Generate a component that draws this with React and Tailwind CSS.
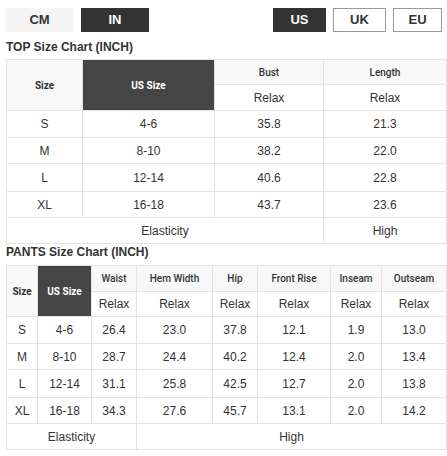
const TOP_ROWS = [
  ['S', '4-6', '35.8', '21.3'],
  ['M', '8-10', '38.2', '22.0'],
  ['L', '12-14', '40.6', '22.8'],
  ['XL', '16-18', '43.7', '23.6'],
]

const PANTS_COLS = ['Waist', 'Hem Width', 'Hip', 'Front Rise', 'Inseam', 'Outseam']

const PANTS_ROWS = [
  ['S', '4-6', '26.4', '23.0', '37.8', '12.1', '1.9', '13.0'],
  ['M', '8-10', '28.7', '24.4', '40.2', '12.4', '2.0', '13.4'],
  ['L', '12-14', '31.1', '25.8', '42.5', '12.7', '2.0', '13.8'],
  ['XL', '16-18', '34.3', '27.6', '45.7', '13.1', '2.0', '14.2'],
]

// row heights follow the reference (they are not all equal)
const ROW_H = ['h-[27px]', 'h-[26px]', 'h-[28px]', 'h-[26px]']

const cell = 'border border-[#e3e3e3] text-center align-middle p-0'
const head = `${cell} bg-[#f8f8f8] font-['Roboto',sans-serif] text-[10px] font-medium text-[#333]`
const headStrong = `${cell} bg-[#f8f8f8] font-['Roboto',sans-serif] text-[10px] font-bold text-[#333]`
const dark = `${cell} bg-[#454545] font-['Roboto',sans-serif] text-[10px] font-bold text-white`

function UnitButton({ label, active, bordered, className }) {
  return (
    <button
      className={`h-6 flex items-center justify-center text-[13px] font-bold ${className} ${
        active ? 'bg-[#333] text-white' : bordered ? 'bg-white text-[#333] border border-[#999]' : 'bg-[#f5f5f5] text-[#333]'
      }`}>
      {label}
    </button>
  )
}

export default function App() {
  return (
    <div className="w-[447px] h-[456px] bg-white text-[#333] font-['Liberation_Sans',Arial,sans-serif] overflow-hidden">
      {/* Unit switches */}
      <div className="flex items-center justify-between pt-2 pl-[5px] pr-[5px]">
        <div className="flex gap-[7px]">
          <UnitButton label="CM" className="w-[69px]" />
          <UnitButton label="IN" active className="w-[68px]" />
        </div>
        <div className="flex gap-[7px]">
          <UnitButton label="US" active className="w-[53px]" />
          <UnitButton label="UK" bordered className="w-[53px]" />
          <UnitButton label="EU" bordered className="w-[49px]" />
        </div>
      </div>

      <div className="pl-[6px] pr-px">
        <p className="text-[12px] font-bold leading-[14px] mt-[8px] mb-[5px]">TOP Size Chart (INCH)</p>

        <table className="w-[440px] table-fixed border-collapse text-[12px]">
          <colgroup>
            <col className="w-[76px]" />
            <col className="w-[132px]" />
            <col className="w-[109px]" />
            <col className="w-[123px]" />
          </colgroup>
          <tbody>
            <tr className="h-[25px]">
              <td rowSpan={2} className={headStrong}>Size</td>
              <td rowSpan={2} className={dark}>US Size</td>
              <td className={head}>Bust</td>
              <td className={head}>Length</td>
            </tr>
            <tr className="h-[26px]">
              <td className={cell}>Relax</td>
              <td className={cell}>Relax</td>
            </tr>
            {TOP_ROWS.map((r, n) => (
              <tr key={r[0]} className={ROW_H[n]}>
                {r.map((v, i) => <td key={i} className={cell}>{v}</td>)}
              </tr>
            ))}
            <tr className="h-[26px]">
              <td colSpan={3} className={cell}>Elasticity</td>
              <td className={cell}>High</td>
            </tr>
          </tbody>
        </table>

        <p className="text-[12px] font-bold leading-[14px] mt-[1px] mb-[6px]">PANTS Size Chart (INCH)</p>

        <table className="w-[440px] table-fixed border-collapse text-[12px]">
          <colgroup>
            <col className="w-[31px]" />
            <col className="w-[54px]" />
            <col className="w-[45px]" />
            <col className="w-[76px]" />
            <col className="w-[45px]" />
            <col className="w-[73px]" />
            <col className="w-[51px]" />
            <col className="w-[65px]" />
          </colgroup>
          <tbody>
            <tr className="h-[26px]">
              <td rowSpan={2} className={headStrong}>Size</td>
              <td rowSpan={2} className={dark}>US Size</td>
              {PANTS_COLS.map(c => <td key={c} className={head}>{c}</td>)}
            </tr>
            <tr className="h-[25px]">
              {PANTS_COLS.map(c => <td key={c} className={cell}>Relax</td>)}
            </tr>
            {PANTS_ROWS.map((r, n) => (
              <tr key={r[0]} className={ROW_H[n]}>
                {r.map((v, i) => <td key={i} className={cell}>{v}</td>)}
              </tr>
            ))}
            <tr className="h-[26px]">
              <td colSpan={3} className={cell}>Elasticity</td>
              <td colSpan={5} className={cell}>High</td>
            </tr>
          </tbody>
        </table>
      </div>
    </div>
  )
}
